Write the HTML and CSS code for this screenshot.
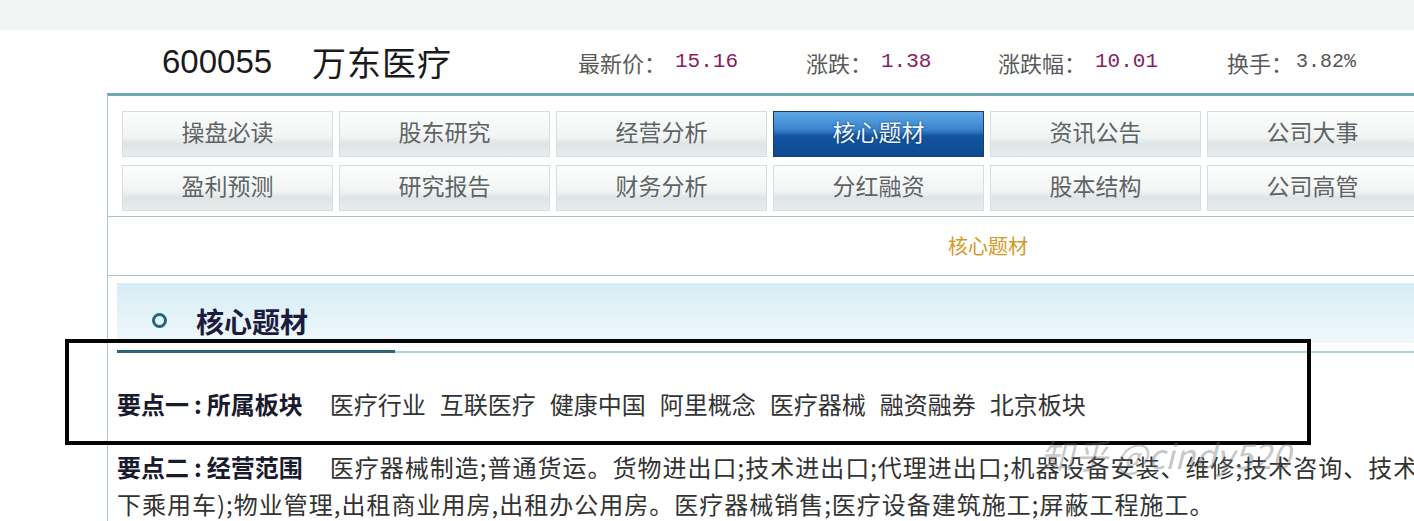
FILE: index.html
```html
<!DOCTYPE html>
<html lang="zh-CN">
<head>
<meta charset="utf-8">
<title>600055 万东医疗 - 核心题材</title>
<link rel="stylesheet" href="styles.css">
</head>
<body>
<div class="topband"></div>
<div class="quote">
  <span class="code">600055</span>
  <span class="name">万东医疗</span>
  <span class="stat s1"><span class="lbl">最新价：</span><span class="val">15.16</span></span>
  <span class="stat s2"><span class="lbl">涨跌：</span><span class="val">1.38</span></span>
  <span class="stat s3"><span class="lbl">涨跌幅：</span><span class="val">10.01</span></span>
  <span class="stat s4"><span class="lbl short">换手：</span><span class="val gray">3.82%</span></span>
</div>
<div class="panel">
  <div class="tabs">
    <div class="tab">操盘必读</div>
    <div class="tab">股东研究</div>
    <div class="tab">经营分析</div>
    <div class="tab active">核心题材</div>
    <div class="tab">资讯公告</div>
    <div class="tab">公司大事</div>
    <div class="tab">盈利预测</div>
    <div class="tab">研究报告</div>
    <div class="tab">财务分析</div>
    <div class="tab">分红融资</div>
    <div class="tab">股本结构</div>
    <div class="tab">公司高管</div>
  </div>
  <div class="crumb">核心题材</div>
  <div class="section">
    <div class="sec-head">
      <span class="ring"></span>
      <span class="sec-title">核心题材</span>
    </div>
    <div class="sec-rule"><span class="rule-dark"></span><span class="rule-light"></span></div>
    <div class="points">
      <div class="point p1"><b>要点一<span class="colon">:</span>所属板块</b><span class="tag first">医疗行业</span><span class="tag">互联医疗</span><span class="tag">健康中国</span><span class="tag">阿里概念</span><span class="tag">医疗器械</span><span class="tag">融资融券</span><span class="tag">北京板块</span></div>
      <div class="point"><b>要点二<span class="colon">:</span>经营范围</b><span class="tag first wide">医疗器械制造;普通货运。货物进出口;技术进出口;代理进出口;机器设备安装、维修;技术咨询、技术服务;销售汽车(不含九座以</span></div>
      <div class="point wide">下乘用车);物业管理,出租商业用房,出租办公用房。医疗器械销售;医疗设备建筑施工;屏蔽工程施工。</div>
    </div>
  </div>
</div>
<div class="mark"></div>
<div class="watermark">知乎 @cindy520</div>
</body>
</html>
```
FILE: styles.css
```css
html, body {
  margin: 0;
  padding: 0;
}
body {
  width: 1414px;
  height: 521px;
  overflow: hidden;
  background: #ffffff;
  font-family: "Noto Sans CJK SC", "Noto Sans", sans-serif;
  color: #333;
  position: relative;
}
.topband {
  height: 30px;
  background: #f2f3f3;
}
.quote {
  height: 63px;
  display: flex;
  align-items: center;
  white-space: nowrap;
}
.code {
  margin-left: 162px;
  font-size: 33px;
  color: #1a1a1a;
  width: 150px;
  font-family: "Liberation Sans", "Noto Sans CJK SC", sans-serif;
}
.name {
  font-size: 34px;
  color: #1a1a1a;
  width: 266px;
  letter-spacing: 1px;
}
.stat {
  font-size: 22px;
  color: #5a5a5a;
  display: inline-flex;
  align-items: center;
}
.s1 { width: 228px; }
.s2 { width: 192px; }
.s3 { width: 229px; }
.lbl { margin-right: 9px; }
.lbl.short { margin-right: 3px; }
.val {
  font-family: "Liberation Mono", monospace;
  font-size: 21px;
  color: #8a1d5e;
}
.val.gray { color: #555; font-size: 20px; }

.panel {
  margin-left: 107px;
  width: 1760px;
  border-top: 3px solid #6ea9b5;
  border-left: 1px solid #a9c9cc;
}
.tabs {
  display: grid;
  grid-template-columns: repeat(6, 211px);
  grid-auto-rows: 46px;
  column-gap: 6px;
  row-gap: 8px;
  padding: 15px 0 5px 14px;
}
.tab {
  display: flex;
  align-items: center;
  justify-content: center;
  font-size: 23px;
  color: #5e6466;
  border: 1px solid #d6dfe0;
  background: linear-gradient(#fcfdfd 0%, #f3f5f5 55%, #dfe5e6 72%, #e7ecec 100%);
  box-sizing: border-box;
  padding-bottom: 6px;
}
.tab.active {
  color: #eef6ff;
  border: 1px solid #163e72;
  background: linear-gradient(#5fa8e2 0%, #3a84cf 40%, #14549f 55%, #0e4a93 100%);
  text-shadow: 0 0 2px #0b2e5c;
}
.crumb {
  border-top: 1px solid #a9c5c9;
  border-bottom: 1px solid #a9c5c9;
  height: 60px;
  display: flex;
  align-items: center;
  justify-content: center;
  font-size: 20px;
  color: #d39a1e;
  padding-bottom: 2px;
  box-sizing: border-box;
}
.section {
  padding: 7px 0 0 9px;
}
.sec-head {
  height: 60px;
  display: flex;
  align-items: flex-end;
  padding-left: 35px;
  background: linear-gradient(#d6ecf5 0%, #e4f2f8 50%, #f0f8fb 100%);
  width: 1330px;
}
.ring {
  width: 15px;
  height: 15px;
  box-sizing: border-box;
  border: 3px solid #1f6a7a;
  border-radius: 50%;
  margin: 0 29px 15px 0;
}
.sec-title {
  font-size: 28px;
  font-weight: bold;
  color: #1c1c3e;
  line-height: 40px;
  margin-bottom: 2px;
}
.sec-rule {
  display: flex;
  align-items: center;
  height: 3px;
  margin-top: 7px;
}
.rule-dark {
  width: 278px;
  height: 3px;
  background: #2e6479;
}
.rule-light {
  flex: 1;
  height: 2px;
  background: #a6d6d6;
}
.points {
  padding-top: 32px;
  font-size: 24px;
  color: #333;
}
.point {
  white-space: nowrap;
  line-height: 37px;
}
.point b {
  color: #1a1a2e;
}
.colon {
  margin: 0 5px;
}
.p1 {
  margin-bottom: 26px;
}
.tag {
  margin-left: 14px;
}
.tag.first {
  margin-left: 27px;
}
.wide {
  letter-spacing: 1px;
}
.mark {
  position: absolute;
  left: 65px;
  top: 339px;
  width: 1246px;
  height: 106px;
  box-sizing: border-box;
  border: 4px solid #050505;
}
.watermark {
  position: absolute;
  left: 1040px;
  top: 430px;
  font-size: 34px;
  font-style: italic;
  color: rgba(110, 110, 110, 0.4);
  white-space: nowrap;
}
```
